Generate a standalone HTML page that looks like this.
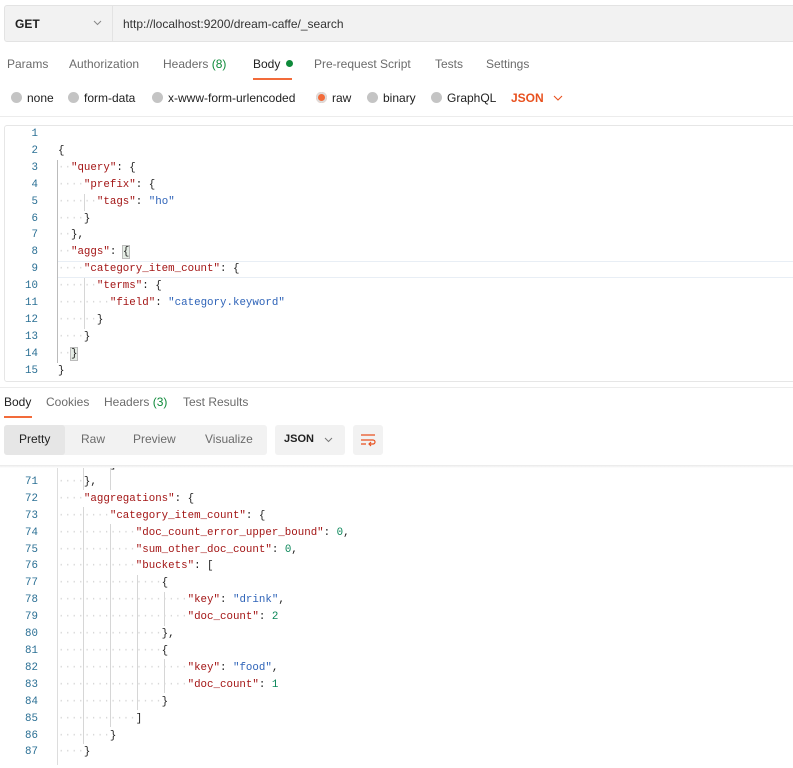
<!DOCTYPE html>
<html><head><meta charset="utf-8"><style>
*{margin:0;padding:0;box-sizing:border-box}
body{width:793px;height:768px;overflow:hidden;background:#fff;font-family:"Liberation Sans",sans-serif;font-size:12px;color:#212121;position:relative}
.abs{position:absolute}
.url{left:4px;top:5px;width:800px;height:37px;background:#f2f2f2;border:1px solid #e3e3e3;border-radius:3px}
.url .m{position:absolute;left:10px;top:11px;font-weight:bold;font-size:12px}
.url .div{position:absolute;left:107px;top:0;width:1px;height:35px;background:#e3e3e3}
.url .u{position:absolute;left:118px;top:11px;color:#333;font-size:12px}
.tab{position:absolute;top:57px;color:#6b6b6b;font-size:12px}
.radio{position:absolute;top:91px;font-size:12px;color:#212121}
.radio i{display:inline-block;width:11px;height:11px;border-radius:50%;background:#c4c4c4;vertical-align:-1px;margin-right:5px}
.ed{left:4px;top:125px;width:800px;height:257px;border:1px solid #e6e6e6;border-radius:3px}
.code{font-family:"Liberation Mono",monospace;font-size:10.8px;white-space:pre;line-height:16.9px}
.ln{position:absolute;left:0;width:38px;text-align:right;color:#2a6f94}
.tx{position:absolute;left:58px}
.k{color:#a31515}.s{color:#2e63b8}.n{color:#098658}.d{color:#d8d8d8}
.btn{position:absolute;top:425px;height:30px;background:#f2f2f2;border-radius:3px}
.g{position:absolute;width:1px;background:#d6d6d6}
</style></head><body>
<div class="abs url"><span class="m">GET</span><svg style="position:absolute;left:88px;top:14px" width="9" height="6" viewBox="0 0 9 6"><path d="M1 1L4.5 4.5L8 1" fill="none" stroke="#888" stroke-width="1"/></svg><div class="div"></div><span class="u">http://localhost:9200/dream-caffe/_search</span></div>

<span class="tab" style="left:7px">Params</span>
<span class="tab" style="left:69px">Authorization</span>
<span class="tab" style="left:163px">Headers <span style="color:#0e8a3a">(8)</span></span>
<span class="tab" style="left:253px;color:#212121">Body <span style="display:inline-block;width:7px;height:7px;border-radius:50%;background:#0e8a3a;vertical-align:1px;margin-left:2px"></span></span>
<div class="abs" style="left:253px;top:78px;width:39px;height:2px;background:#f26b3a"></div>
<span class="tab" style="left:314px">Pre-request Script</span>
<span class="tab" style="left:435px">Tests</span>
<span class="tab" style="left:486px">Settings</span>

<span class="radio" style="left:11px"><i></i>none</span>
<span class="radio" style="left:68px"><i></i>form-data</span>
<span class="radio" style="left:152px"><i></i>x-www-form-urlencoded</span>
<span class="radio" style="left:316px"><i style="background:#f26b3a;box-shadow:0 0 0 2px #ddd inset"></i>raw</span>
<span class="radio" style="left:367px"><i></i>binary</span>
<span class="radio" style="left:431px"><i></i>GraphQL</span>
<span class="radio" style="left:511px;color:#e8511f;font-weight:bold">JSON</span>
<svg class="abs" style="left:553px;top:95px" width="10" height="6" viewBox="0 0 10 6"><path d="M1 1L5 5L9 1" fill="none" stroke="#e8511f" stroke-width="1.1"/></svg>
<div class="abs" style="left:0;top:116px;width:793px;height:1px;background:#ececec"></div>

<div class="abs ed"></div>
<div class="abs" style="left:58px;top:261px;width:740px;height:17px;border-top:1px solid #e8eef5;border-bottom:1px solid #e8eef5"></div>
<div class="abs" style="left:57px;top:160px;width:1px;height:203px;background:#bbb"></div>
<div class="g" style="left:84px;top:194px;height:17px"></div>
<div class="g" style="left:84px;top:278px;height:51px"></div>
<div class="abs code" style="left:0;top:126px;width:800px">
<div class="ln" style="top:0">1
2
3
4
5
6
7
8
9
10
11
12
13
14
15</div><div class="tx" style="top:0">
{
<span class="d">··</span><span class="k">"query"</span>: {
<span class="d">····</span><span class="k">"prefix"</span>: {
<span class="d">······</span><span class="k">"tags"</span>: <span class="s">"ho"</span>
<span class="d">····</span>}
<span class="d">··</span>},
<span class="d">··</span><span class="k">"aggs"</span>: <span style="background:#e4ece4;outline:1px solid #bbb">{</span>
<span class="d">····</span><span class="k">"category_item_count"</span>: {
<span class="d">······</span><span class="k">"terms"</span>: {
<span class="d">········</span><span class="k">"field"</span>: <span class="s">"category.keyword"</span>
<span class="d">······</span>}
<span class="d">····</span>}
<span class="d">··</span><span style="background:#e4ece4;outline:1px solid #bbb">}</span>
}</div></div>

<div class="abs" style="left:0;top:387px;width:793px;height:1px;background:#ececec"></div>
<span class="abs" style="left:4px;top:395px;font-size:12px;color:#212121">Body</span>
<div class="abs" style="left:4px;top:416px;width:28px;height:2px;background:#f26b3a"></div>
<span class="abs" style="left:46px;top:395px;color:#6b6b6b">Cookies</span>
<span class="abs" style="left:104px;top:395px;color:#6b6b6b">Headers <span style="color:#0e8a3a">(3)</span></span>
<span class="abs" style="left:183px;top:395px;color:#6b6b6b">Test Results</span>

<div class="btn" style="left:4px;width:263px"></div>
<div class="btn" style="left:4px;width:61px;background:#e6e6e6"></div>
<span class="abs" style="left:19px;top:432px">Pretty</span>
<span class="abs" style="left:81px;top:432px;color:#6b6b6b">Raw</span>
<span class="abs" style="left:133px;top:432px;color:#6b6b6b">Preview</span>
<span class="abs" style="left:205px;top:432px;color:#6b6b6b">Visualize</span>
<div class="btn" style="left:275px;width:70px"></div>
<span class="abs" style="left:284px;top:433px;font-size:11px;font-weight:bold">JSON</span>
<svg class="abs" style="left:324px;top:437px" width="9" height="6" viewBox="0 0 9 6"><path d="M1 1L4.5 4.5L8 1" fill="none" stroke="#777" stroke-width="1"/></svg>
<div class="btn" style="left:353px;width:30px"></div>
<svg class="abs" style="left:360px;top:432px" width="16" height="16" viewBox="0 0 16 16" fill="none" stroke="#e8511f" stroke-width="1.2"><path d="M1 3H15M1 8H13a2 2 0 0 1 0 4H9M11 10L9 12L11 14M1 12H6"/></svg>

<div class="abs" style="left:0;top:465px;width:793px;height:303px;overflow:hidden">
<div class="abs" style="left:57px;top:0;width:1px;height:300px;background:#ddd"></div>
<div class="g" style="left:83px;top:0;height:25px"></div>
<div class="g" style="left:110px;top:0;height:25px"></div>
<div class="g" style="left:83px;top:42px;height:237px"></div>
<div class="g" style="left:110px;top:59px;height:203px"></div>
<div class="g" style="left:137px;top:110px;height:135px"></div>
<div class="g" style="left:164px;top:127px;height:34px"></div>
<div class="g" style="left:164px;top:194px;height:34px"></div>
<div class="abs code" style="left:0;top:-8px;width:800px">
<div class="ln" style="top:0">70
71
72
73
74
75
76
77
78
79
80
81
82
83
84
85
86
87</div><div class="tx" style="top:0"><span class="d">········</span>]
<span class="d">····</span>},
<span class="d">····</span><span class="k">"aggregations"</span>: {
<span class="d">········</span><span class="k">"category_item_count"</span>: {
<span class="d">············</span><span class="k">"doc_count_error_upper_bound"</span>: <span class="n">0</span>,
<span class="d">············</span><span class="k">"sum_other_doc_count"</span>: <span class="n">0</span>,
<span class="d">············</span><span class="k">"buckets"</span>: [
<span class="d">················</span>{
<span class="d">····················</span><span class="k">"key"</span>: <span class="s">"drink"</span>,
<span class="d">····················</span><span class="k">"doc_count"</span>: <span class="n">2</span>
<span class="d">················</span>},
<span class="d">················</span>{
<span class="d">····················</span><span class="k">"key"</span>: <span class="s">"food"</span>,
<span class="d">····················</span><span class="k">"doc_count"</span>: <span class="n">1</span>
<span class="d">················</span>}
<span class="d">············</span>]
<span class="d">········</span>}
<span class="d">····</span>}</div></div>
<div class="abs" style="left:0;top:0;width:793px;height:3px;background:linear-gradient(#e8e8e8,#fff)"></div>
</div>
</body></html>
